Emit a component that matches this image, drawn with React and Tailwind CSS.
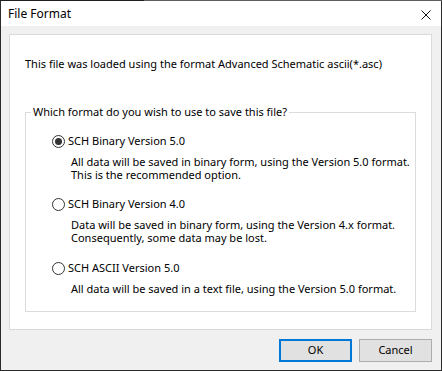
import React from "react";

function Radio({ checked }) {
  return (
    <span className="flex h-[13px] w-[13px] shrink-0 items-center justify-center rounded-full border border-[#333333] bg-white">
      {checked && <span className="h-[7px] w-[7px] rounded-full bg-[#333333]" />}
    </span>
  );
}

function Option({ checked, label, lines, className = "" }) {
  return (
    <div className={"flex flex-col " + className}>
      <div className="flex h-[16px] items-center gap-[3px] pl-[26px]">
        <Radio checked={checked} />
        <span className="whitespace-nowrap">{label}</span>
      </div>
      <div className="mt-[6px] flex flex-col pl-[45px] leading-[13px]">
        {lines.map((l, i) => (
          <span key={i} className="whitespace-nowrap">
            {l}
          </span>
        ))}
      </div>
    </div>
  );
}

export default function App() {
  return (
    <div
      className="flex h-[371px] w-[442px] flex-col text-[11px] text-black"
      style={{ fontFamily: '"Noto Sans", "Segoe UI", sans-serif' }}
    >
      <div className="flex h-px shrink-0">
        <div className="w-[144px] bg-[#1f1f1f]" />
        <div className="flex-1 bg-[#5e5e5e]" />
      </div>
      <div className="flex flex-1 flex-col border-x border-b border-[#2b2b2b]">
        <div className="flex h-[25px] shrink-0 items-center justify-between bg-white pl-[7px] pr-[10px] text-[12px]">
          <span>File Format</span>
          <svg width="10" height="10" viewBox="0 0 10 10" className="mt-[2px]">
            <path d="M0.5 0.5 L9.5 9.5 M9.5 0.5 L0.5 9.5" stroke="#111" strokeWidth="1" />
          </svg>
        </div>
        <div className="flex flex-1 flex-col bg-[#f0f0f0] pl-[8px] pr-[9px] pt-[8px]">
          <div className="flex h-[296px] flex-col border border-[#dadada] bg-white px-[15px] pt-[21px]">
            <p className="whitespace-nowrap leading-[16px]">
              This file was loaded using the format Advanced Schematic ascii(*.asc)
            </p>
            <fieldset className="mt-[32px] flex h-[208px] flex-col border border-[#dcdcdc] pt-[13px]">
              <legend className="ml-[5px] whitespace-nowrap px-[2px] leading-[16px]">
                Which format do you wish to use to save this file?
              </legend>
              <Option
                checked
                label="SCH Binary Version 5.0"
                lines={[
                  "All data will be saved in binary form, using the Version 5.0 format.",
                  "This is the recommended option.",
                ]}
              />
              <Option
                className="mt-[15px]"
                label="SCH Binary Version 4.0"
                lines={[
                  "Data will be saved in binary form, using the Version 4.x format.",
                  "Consequently, some data may be lost.",
                ]}
              />
              <Option
                className="mt-[16px]"
                label="SCH ASCII Version 5.0"
                lines={["All data will be saved in a text file, using the Version 5.0 format."]}
              />
            </fieldset>
          </div>
          <div className="mt-[9px] flex justify-end gap-[7px]">
            <button className="flex h-[23px] w-[73px] items-center justify-center border-2 border-[#0078d7] bg-[#e1e1e1]">
              OK
            </button>
            <button className="flex h-[23px] w-[73px] items-center justify-center border border-[#adadad] bg-[#e1e1e1]">
              Cancel
            </button>
          </div>
        </div>
      </div>
    </div>
  );
}
